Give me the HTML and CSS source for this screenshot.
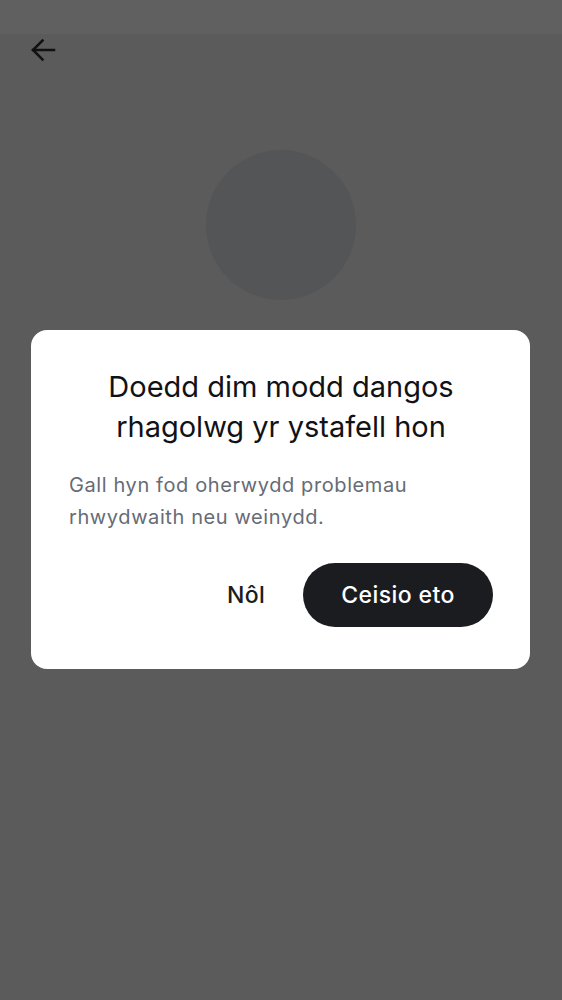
FILE: index.html
```html
<!DOCTYPE html>
<html>
<head>
<meta charset="utf-8">
<link rel="stylesheet" href="styles.css">
</head>
<body>
<div class="screen">
  <div class="statusbar"></div>
  <div class="topbar">
    <svg class="back" width="28" height="28" viewBox="0 0 28 28" fill="none" stroke="#111" stroke-width="2.5" stroke-linecap="square">
      <path d="M4 14H25"/>
      <path d="M13.5 4.5L4 14l9.5 9.5"/>
    </svg>
  </div>
  <div class="avatar-wrap"><div class="avatar"></div></div>

  <div class="dialog">
    <h1 class="title">Doedd dim modd dangos rhagolwg yr ystafell hon</h1>
    <p class="body">Gall hyn fod oherwydd problemau rhwydwaith neu weinydd.</p>
    <div class="actions">
      <button class="btn-text">Nôl</button>
      <button class="btn-primary">Ceisio eto</button>
    </div>
  </div>
</div>
</body>
</html>
```

FILE: styles.css
```css
html, body {
  margin: 0;
  padding: 0;
}
body {
  width: 562px;
  height: 1000px;
  background: #5b5b5b;
  font-family: Inter, Roboto, "Noto Sans", sans-serif;
  overflow: hidden;
}
.screen {
  position: relative;
  width: 562px;
  height: 1000px;
  display: flex;
  flex-direction: column;
}
.statusbar {
  height: 34px;
  background: #606060;
}
.topbar {
  height: 32px;
  padding-left: 29px;
  display: flex;
  align-items: flex-start;
}
.back {
  margin-top: 2px;
}
.avatar-wrap {
  display: flex;
  justify-content: center;
  padding-top: 84px;
}
.avatar {
  width: 150px;
  height: 150px;
  border-radius: 50%;
  background: #545557;
}
.dialog {
  position: absolute;
  left: 31px;
  top: 330px;
  width: 499px;
  height: 339px;
  box-sizing: border-box;
  background: #fff;
  border-radius: 16px;
  padding: 37px 37px 0 38px;
}
.title {
  margin: 0;
  font-size: 29px;
  font-weight: 400;
  line-height: 40px;
  text-align: center;
  color: #111216;
  padding: 0 20px;
}
.body {
  margin: 22px 0 0 0;
  font-size: 20px;
  line-height: 32px;
  letter-spacing: 0.6px;
  color: #656c76;
}
.actions {
  margin-top: 30px;
  display: flex;
  justify-content: flex-end;
  align-items: center;
  gap: 38px;
}
.btn-text {
  border: none;
  background: none;
  font-family: inherit;
  font-size: 23px;
  font-weight: 500;
  letter-spacing: 0.3px;
  color: #1b1c20;
  padding: 0;
}
.btn-primary {
  border: none;
  font-family: inherit;
  font-size: 23px;
  font-weight: 500;
  letter-spacing: 0.4px;
  color: #fff;
  background: #1b1c20;
  width: 190px;
  height: 64px;
  border-radius: 32px;
}
```
